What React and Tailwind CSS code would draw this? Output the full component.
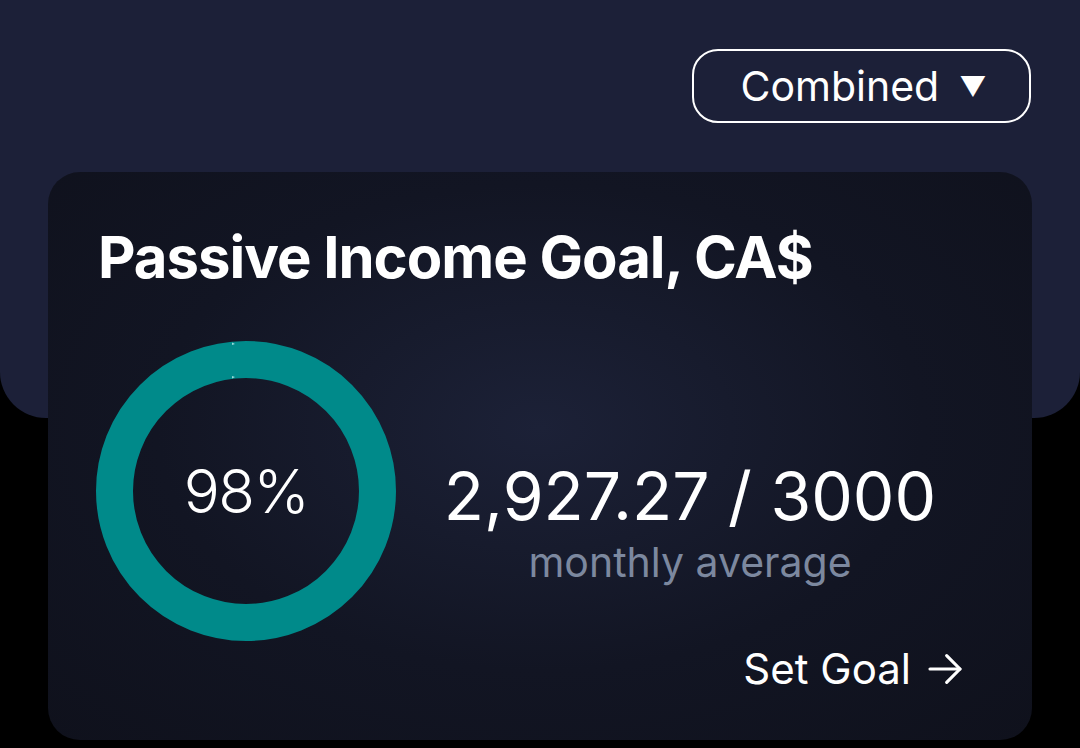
import React from 'react';

const font = { fontFamily: '"Inter", "Liberation Sans", sans-serif' };

function Donut({ percent }) {
  return (
    <div className="relative w-[300px] h-[300px] shrink-0">
      <svg width="300" height="300" viewBox="0 0 300 300">
        <circle cx="150" cy="150" r="131.5" fill="none" stroke="#008a8a" strokeWidth="37" />
        {/* tiny seam where the arc starts */}
        <path d="M136 1.5 l3 1.5 -3 1z" fill="#dff" opacity="0.7" />
        <path d="M136 37.5 l3 -1.5 -3 -1z" fill="#dff" opacity="0.7" />
      </svg>
      <div className="absolute inset-0 flex items-center justify-center">
        <span className="text-white text-[60px] font-light tracking-[-1.5px] leading-none">{percent}%</span>
      </div>
    </div>
  );
}

export default function App() {
  return (
    <div className="w-[1080px] h-[748px] bg-black overflow-hidden" style={font}>
      {/* Header */}
      <div className="h-[418px] bg-[#1c2038] rounded-b-[46px] flex justify-end items-start pt-[49px] pr-[49px]">
        <button className="w-[339px] h-[74px] border-[2.5px] border-white rounded-[26px] flex items-center justify-center gap-[20px] pl-[4px] text-white">
          <span className="text-[41px] leading-none">Combined</span>
          <span className="text-[27px] leading-none">▼</span>
        </button>
      </div>

      {/* Goal card */}
      <div className="-mt-[246px] mx-[48px] h-[568px] rounded-[32px] bg-[radial-gradient(ellipse_at_50%_45%,#1c2137_0%,#121523_55%,#0f111c_100%)] px-[48px] pt-[50px] flex flex-col">
        <h1 className="text-white text-[58px] font-bold leading-[70px] pl-[2px] tracking-[-1px]">
          Passive Income Goal, CA$
        </h1>

        <div className="flex items-start mt-[49px]">
          <Donut percent={98} />
          <div className="flex-1 flex flex-col items-center mt-[122px]">
            <div className="text-white text-[66px] leading-[66px] tracking-[0px]">2,927.27 / 3000</div>
            <div className="text-[#7c889f] text-[41px] leading-[44px] mt-[11px]">monthly average</div>
          </div>
        </div>

        <div className="flex justify-end items-center gap-[14px] pr-[19px] mt-[7px] text-white">
          <span className="text-[42px] leading-none">Set Goal</span>
          <svg width="40" height="40" viewBox="0 0 24 24" fill="none" stroke="white" strokeWidth="1.9" strokeLinecap="round" strokeLinejoin="round">
            <path d="M3 12h18" />
            <path d="M13 4l8 8-8 8" />
          </svg>
        </div>
      </div>
    </div>
  );
}
